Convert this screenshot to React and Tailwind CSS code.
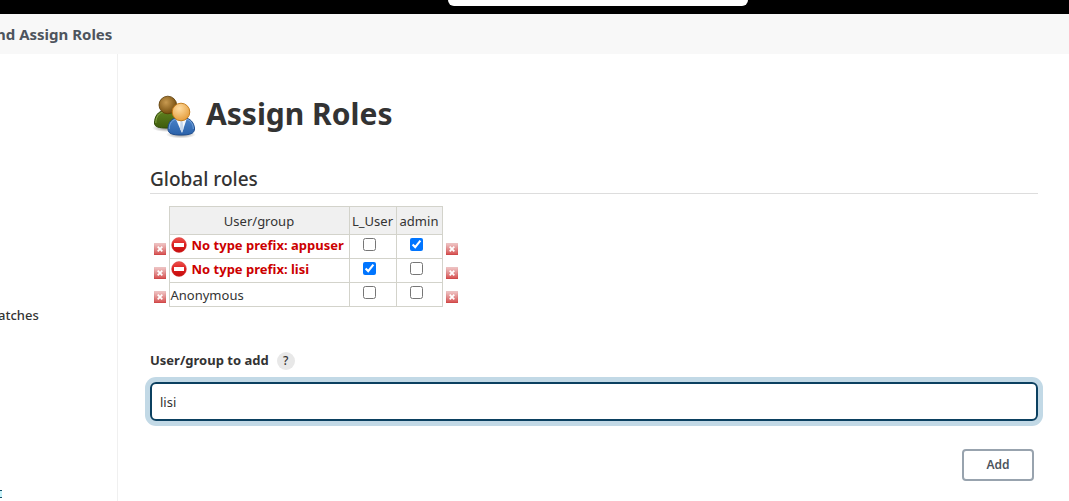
import { useState } from "react";

const columns = ["L_User", "admin"];

const initialRows = [
  { name: "appuser", invalid: true, roles: { L_User: false, admin: true } },
  { name: "lisi", invalid: true, roles: { L_User: true, admin: false } },
  { name: "Anonymous", invalid: false, roles: { L_User: false, admin: false } },
];

const UsersIcon = () => (
  <svg className="size-12 shrink-0" viewBox="0 -2 48 48" aria-hidden="true">
    <defs>
      <radialGradient id="headBack" cx="0.4" cy="0.35" r="0.7">
        <stop offset="0" stopColor="#c89a50" />
        <stop offset="1" stopColor="#6e4708" />
      </radialGradient>
      <radialGradient id="headFront" cx="0.4" cy="0.3" r="0.75">
        <stop offset="0" stopColor="#ffdca0" />
        <stop offset="1" stopColor="#e39a38" />
      </radialGradient>
      <linearGradient id="bodyBack" x1="0" y1="0" x2="0" y2="1">
        <stop offset="0" stopColor="#5f8020" />
        <stop offset="1" stopColor="#3f5d0b" />
      </linearGradient>
      <linearGradient id="bodyFront" x1="0" y1="0" x2="0" y2="1">
        <stop offset="0" stopColor="#4a82c8" />
        <stop offset="1" stopColor="#2b62aa" />
      </linearGradient>
      <radialGradient id="shadow">
        <stop offset="0" stopColor="#000" stopOpacity="0.45" />
        <stop offset="1" stopColor="#000" stopOpacity="0" />
      </radialGradient>
    </defs>
    <ellipse cx="17" cy="36" rx="15" ry="4" fill="url(#shadow)" />
    <ellipse cx="31" cy="42.500" rx="15" ry="4" fill="url(#shadow)" />
    <path d="M4.500 31c0-7 4-12 9-12h8c5 0 9 4 9 11 0 4-4 6-13 6-9 0-13-1-13-5z" fill="url(#bodyBack)" stroke="#2f4a05" />
    <path d="M5.800 31c0-6 3.500-10.800 8-10.800" fill="none" stroke="#9dbb5c" strokeWidth="0.700" />
    <circle cx="17.800" cy="13" r="8.800" fill="url(#headBack)" stroke="#5b3a05" strokeWidth="0.800" />
    <path d="M18 37c0-7 4-11 9-11h8c5 0 9.500 5 9.500 11 0 4.500-4.500 6-13.500 6S18 41.500 18 37z" fill="url(#bodyFront)" stroke="#1d4b8b" />
    <path d="M19.200 37c0-6 3.400-9.800 8-9.800h8c4.600 0 8.100 4.300 8.100 9.800" fill="none" stroke="#8db8ea" strokeWidth="0.700" />
    <path d="M26 27.500h10.500L32 41z" fill="#f5f8fc" />
    <path d="M30.500 29h2l1 8-1.500 3.500-2-3.500z" fill="#c8d8ec" />
    <circle cx="31" cy="20" r="8.800" fill="url(#headFront)" stroke="#c17612" strokeWidth="0.900" />
  </svg>
);

const ErrorIcon = () => (
  <svg className="size-4 shrink-0" viewBox="0 0 16 16" aria-hidden="true">
    <defs>
      <linearGradient id="stop" x1="0" y1="0" x2="0" y2="1">
        <stop offset="0" stopColor="#ee5450" />
        <stop offset="0.5" stopColor="#dc1c1c" />
        <stop offset="1" stopColor="#c40d0d" />
      </linearGradient>
    </defs>
    <circle cx="8" cy="8" r="7.400" fill="url(#stop)" stroke="#d63a3a" strokeWidth="0.500" />
    <rect x="3" y="6" width="10" height="4" fill="#fff" />
  </svg>
);

const RemoveButton = ({ label, onClick }) => (
  <button type="button" aria-label={label} onClick={onClick} className="block cursor-pointer">
    <svg className="size-3" viewBox="0 0 12 12" aria-hidden="true">
      <defs>
        <linearGradient id="remove" x1="0" y1="0" x2="0" y2="1">
          <stop offset="0" stopColor="#f0c4c4" />
          <stop offset="0.5" stopColor="#e29090" />
          <stop offset="1" stopColor="#d85050" />
        </linearGradient>
        <linearGradient id="removeEdge" x1="0" y1="0" x2="0" y2="1">
          <stop offset="0" stopColor="#ecc0c0" />
          <stop offset="1" stopColor="#cf4a4a" />
        </linearGradient>
      </defs>
      <rect x="0.500" y="0.500" width="11" height="11" fill="url(#remove)" stroke="url(#removeEdge)" />
      <path d="M3.700 3.700l4.600 4.600M8.300 3.700l-4.600 4.600" stroke="#fff" strokeWidth="1.800" />
    </svg>
  </button>
);

const RolesTable = () => {
  const [rows, setRows] = useState(initialRows);

  const toggle = (name, role) => {
    setRows((prev) =>
      prev.map((row) =>
        row.name === name
          ? { ...row, roles: { ...row.roles, [role]: !row.roles[role] } }
          : row
      )
    );
  };

  const remove = (name) => {
    setRows((prev) => prev.filter((row) => row.name !== name));
  };

  return (
    <table className="mt-3 table-fixed w-[312px] border-collapse text-[13px] leading-5">
      <colgroup>
        <col className="w-[19px]" />
        <col className="w-[180px]" />
        <col className="w-[47px]" />
        <col className="w-[46px]" />
        <col className="w-5" />
      </colgroup>
      <thead>
        <tr className="h-7">
          <td />
          <th className="border border-[#d3d3cb] bg-[#f0f0f0] p-0 font-normal">User/group</th>
          {columns.map((role) => (
            <th key={role} className="border border-[#d3d3cb] bg-[#f0f0f0] p-0 font-normal">
              {role}
            </th>
          ))}
          <td />
        </tr>
      </thead>
      <tbody>
        {rows.map((row) => (
          <tr key={row.name} className="h-6">
            <td className="p-0 pl-1 pt-1">
              <RemoveButton label={`Remove ${row.name}`} onClick={() => remove(row.name)} />
            </td>
            <td className="whitespace-nowrap border border-[#d3d3cb] p-0 pl-px">
              {row.invalid ? (
                <div className="flex items-center gap-[5px] pb-1 leading-4 font-bold text-[#cc0000]">
                  <ErrorIcon />
                  No type prefix: {row.name}
                </div>
              ) : (
                row.name
              )}
            </td>
            {columns.map((role) => (
              <td key={role} className="border border-[#d3d3cb] p-0 pr-1.5 pb-1">
                <input
                  type="checkbox"
                  aria-label={`${role} for ${row.name}`}
                  checked={row.roles[role]}
                  onChange={() => toggle(row.name, role)}
                  className="mx-auto block size-[13px]"
                />
              </td>
            ))}
            <td className="p-0 pl-[3px] pt-1">
              <RemoveButton label={`Remove ${row.name}`} onClick={() => remove(row.name)} />
            </td>
          </tr>
        ))}
      </tbody>
    </table>
  );
};

const App = () => {
  const [user, setUser] = useState("lisi");

  return (
    <div className="flex min-h-screen flex-col overflow-hidden bg-white font-['Noto_Sans','Open_Sans',sans-serif] text-[#333333]">
      <header className="flex h-3.5 items-start bg-black pl-[448px]">
        <input aria-label="Search" className="h-1.5 w-[300px] rounded-b-md bg-white" />
      </header>
      <nav className="flex h-10 items-center bg-[#f8f8f8]">
        <a href="#roles" className="-ml-1 whitespace-nowrap text-[15px] font-bold text-[#4d545d]">
          nd Assign Roles
        </a>
      </nav>
      <div className="flex grow">
        <aside className="w-[118px] shrink-0 border-r border-[#f0f0f0] pt-[251px] text-[13px] leading-5 font-medium">
          <a href="#patches" className="-ml-0.5 block">atches</a>
          <div className="mt-[165px] h-2 w-0.5 border-y border-[#14506a] bg-[#c8f4fa]" />
        </aside>
        <main className="min-w-0 grow pl-8 pr-[31px] pt-9">
          <h1 className="flex items-center gap-2 text-[30px] leading-[48px] font-bold">
            <UsersIcon />
            Assign Roles
          </h1>
          <h2 className="mt-[27px] border-b border-[#dddddd] text-[19px] leading-7 font-medium">Global roles</h2>
          <RolesTable />
          <div className="mt-11 flex h-5 items-center gap-2 text-[13px]">
            <label htmlFor="user" className="font-bold">User/group to add</label>
            <a
              href="#help"
              aria-label="Help"
              className="flex size-[18px] items-center justify-center rounded-full bg-[#e8e8e8] text-xs font-medium"
            >
              ?
            </a>
          </div>
          <input
            id="user"
            type="text"
            value={user}
            onChange={(e) => setUser(e.target.value)}
            className="mt-[11px] block h-[39px] w-full rounded-md border-2 border-[#0b4060] px-2 text-[13px] ring-5 ring-[#c2d9e6] outline-none"
          />
          <div className="mt-7 mr-1 flex justify-end">
            <button
              type="button"
              className="h-8 w-[72px] rounded border-2 border-[#98a3ae] text-xs font-semibold text-[#4d545d]"
            >
              Add
            </button>
          </div>
        </main>
      </div>
    </div>
  );
};

export default App;
